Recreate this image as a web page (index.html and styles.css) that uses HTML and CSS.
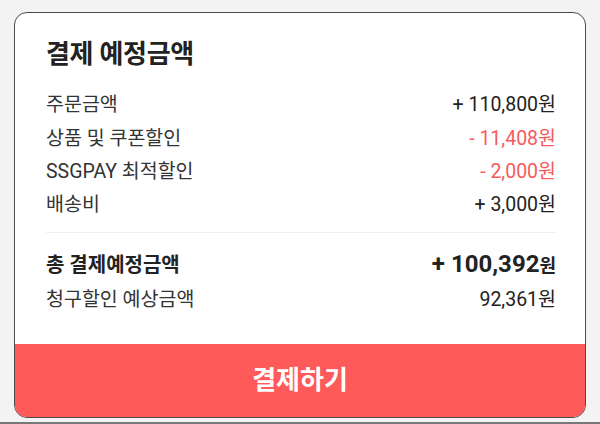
FILE: index.html
```html
<!DOCTYPE html>
<html lang="ko">
<head>
    <meta charset="UTF-8">
    <meta name="viewport" content="width=device-width, initial-scale=1.0">
    <title>결제 예정금액</title>
    <link rel="stylesheet" href="styles.css">
</head>
<body>
    <div class="pay-card">
        <div class="pay-body">
            <h2 class="pay-title">결제 예정금액</h2>

            <div class="pay-row">
                <span>주문금액</span>
                <span class="amount">+ 110,800원</span>
            </div>
            <div class="pay-row">
                <span>상품 및 쿠폰할인</span>
                <span class="amount minus">- 11,408원</span>
            </div>
            <div class="pay-row">
                <span>SSGPAY 최적할인</span>
                <span class="amount minus">- 2,000원</span>
            </div>
            <div class="pay-row">
                <span>배송비</span>
                <span class="amount">+ 3,000원</span>
            </div>

            <hr class="pay-divider">

            <div class="pay-row total">
                <span>총 결제예정금액</span>
                <span class="amount">+ 100,392<small>원</small></span>
            </div>
            <div class="pay-row">
                <span>청구할인 예상금액</span>
                <span class="amount">92,361원</span>
            </div>
        </div>

        <button class="pay-button" type="button">결제하기</button>
    </div>
    <div class="bottom-line"></div>
</body>
</html>
```

FILE: styles.css
```css
html, body {
    margin: 0;
    padding: 0;
}
body {
    width: 600px;
    height: 424px;
    background-color: #f3f3f3;
    font-family: Roboto, "Noto Sans CJK KR", sans-serif;
    color: #222;
    padding: 12px 14px 0 14px;
    box-sizing: border-box;
    position: relative;
}
.pay-card {
    height: 406px;
    background-color: #fff;
    border: 1.5px solid #4a4a4a;
    border-radius: 13px;
    overflow: hidden;
    display: flex;
    flex-direction: column;
    box-sizing: border-box;
}
.pay-body {
    flex: 1;
    padding: 21px 29px 0 31px;
}
.pay-title {
    margin: 0 0 12px 0;
    font-size: 26px;
    font-weight: 700;
    line-height: 40px;
    color: #222;
    letter-spacing: -0.3px;
}
.pay-row {
    display: flex;
    justify-content: space-between;
    align-items: center;
    height: 33.4px;
    font-size: 19.5px;
    color: #333;
}
.amount {
    color: #222;
}
.amount.minus {
    color: #f55b5b;
}
.pay-divider {
    margin: 12px 0 14px 0;
    border: none;
    border-top: 1px solid #efefef;
}
.pay-row.total {
    font-size: 20px;
    font-weight: 700;
    color: #222;
    height: 34px;
}
.pay-row.total .amount {
    font-size: 24px;
}
.pay-row.total small {
    font-size: 18px;
}
.pay-button {
    height: 73px;
    padding: 0 0 6px 0;
    border: none;
    background-color: #ff5a5a;
    color: #fff;
    font-family: "Noto Sans CJK KR", sans-serif;
    font-size: 26px;
    font-weight: 700;
    cursor: pointer;
    flex-shrink: 0;
}
.bottom-line {
    position: absolute;
    left: 0;
    right: 0;
    bottom: 0;
    height: 2px;
    background-color: #777;
}
```
